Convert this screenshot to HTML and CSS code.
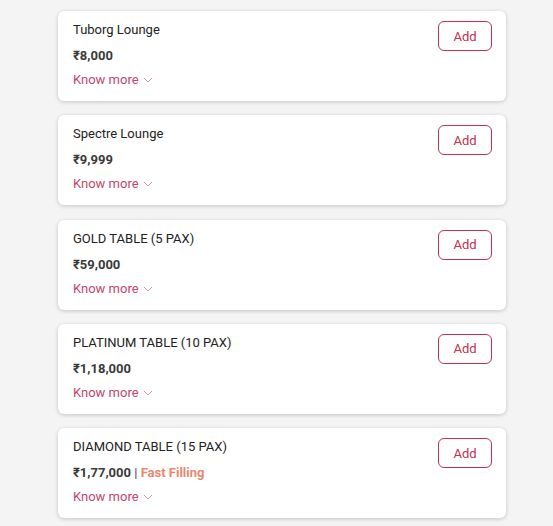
FILE: index.html
```html
<!DOCTYPE html>
<html lang="en">
<head>
    <meta charset="UTF-8">
    <meta name="viewport" content="width=device-width, initial-scale=1.0">
    <title>Tables</title>
    <link rel="stylesheet" href="styles.css">
</head>
<body>
    <div class="list">
        <div class="ticket">
            <div class="ticket-info">
                <p class="ticket-name">Tuborg Lounge</p>
                <p class="ticket-price">₹8,000</p>
                <a class="know-more" href="#">Know more <svg width="10" height="6" viewBox="0 0 10 6"><path d="M1 1l4 4 4-4" fill="none" stroke="currentColor" stroke-width="0.9"/></svg></a>
            </div>
            <button class="add-button">Add</button>
        </div>
        <div class="ticket">
            <div class="ticket-info">
                <p class="ticket-name">Spectre Lounge</p>
                <p class="ticket-price">₹9,999</p>
                <a class="know-more" href="#">Know more <svg width="10" height="6" viewBox="0 0 10 6"><path d="M1 1l4 4 4-4" fill="none" stroke="currentColor" stroke-width="0.9"/></svg></a>
            </div>
            <button class="add-button">Add</button>
        </div>
        <div class="ticket">
            <div class="ticket-info">
                <p class="ticket-name">GOLD TABLE (5 PAX)</p>
                <p class="ticket-price">₹59,000</p>
                <a class="know-more" href="#">Know more <svg width="10" height="6" viewBox="0 0 10 6"><path d="M1 1l4 4 4-4" fill="none" stroke="currentColor" stroke-width="0.9"/></svg></a>
            </div>
            <button class="add-button">Add</button>
        </div>
        <div class="ticket">
            <div class="ticket-info">
                <p class="ticket-name">PLATINUM TABLE (10 PAX)</p>
                <p class="ticket-price">₹1,18,000</p>
                <a class="know-more" href="#">Know more <svg width="10" height="6" viewBox="0 0 10 6"><path d="M1 1l4 4 4-4" fill="none" stroke="currentColor" stroke-width="0.9"/></svg></a>
            </div>
            <button class="add-button">Add</button>
        </div>
        <div class="ticket">
            <div class="ticket-info">
                <p class="ticket-name">DIAMOND TABLE (15 PAX)</p>
                <p class="ticket-price">₹1,77,000 <span class="sep">|</span> <span class="filling">Fast Filling</span></p>
                <a class="know-more" href="#">Know more <svg width="10" height="6" viewBox="0 0 10 6"><path d="M1 1l4 4 4-4" fill="none" stroke="currentColor" stroke-width="0.9"/></svg></a>
            </div>
            <button class="add-button">Add</button>
        </div>
    </div>
</body>
</html>
```

FILE: styles.css
```css
body {
    background-color: #f4f4f4;
    color: #222222;
    font-family: Roboto, "Liberation Sans", sans-serif;
    margin: 0;
    padding: 0;
}

.list {
    width: 448px;
    margin: 0 0 0 58px;
    padding: 11px 0;
    display: flex;
    flex-direction: column;
    gap: 14.25px;
}

.ticket {
    background-color: #ffffff;
    border-radius: 6px;
    box-shadow: 0 1px 4px rgba(0, 0, 0, 0.2);
    height: 90px;
    box-sizing: border-box;
    padding: 10px 14px 0 15px;
    display: flex;
    justify-content: space-between;
    align-items: flex-start;
}

.ticket-info p {
    margin: 0;
}

.ticket-name {
    font-size: 13px;
    line-height: 18px;
    font-weight: 400;
    color: #222222;
}

.ticket-price {
    font-size: 13px;
    line-height: 18px;
    font-weight: 700;
    color: #3a3a3a;
    margin-top: 8px !important;
}

.sep {
    font-weight: 400;
    color: #444444;
}

.filling {
    color: #e8876f;
    font-weight: 700;
}

.know-more {
    display: inline-flex;
    align-items: center;
    gap: 4px;
    margin-top: 6px;
    font-size: 13px;
    line-height: 18px;
    color: #c2456a;
    text-decoration: none;
}

.know-more svg {
    color: #c98aa0;
}

.add-button {
    width: 54px;
    height: 30px;
    background: #ffffff;
    border: 1px solid #c0304f;
    border-radius: 6px;
    color: #c0304f;
    font-family: Roboto, "Liberation Sans", sans-serif;
    font-size: 13px;
    cursor: pointer;
}
```
